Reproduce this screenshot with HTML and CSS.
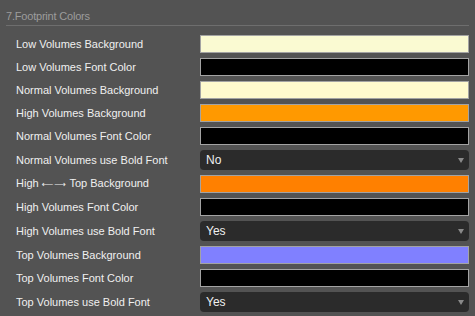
FILE: index.html
```html
<!DOCTYPE html>
<html lang="en">
  <head>
    <meta charset="UTF-8" />
    <title>Footprint Colors</title>
    <link rel="stylesheet" href="styles.css">
  </head>
  <body>
    <section class="panel">
      <h2 class="panel__title">7.Footprint Colors</h2>
      <div class="fields">
        <div class="field">
          <label class="field__label">Low Volumes Background</label>
          <div class="swatch" style="background-color: #fafad2;"></div>
        </div>
        <div class="field">
          <label class="field__label">Low Volumes Font Color</label>
          <div class="swatch" style="background-color: #000000;"></div>
        </div>
        <div class="field">
          <label class="field__label">Normal Volumes Background</label>
          <div class="swatch" style="background-color: #fffacd;"></div>
        </div>
        <div class="field">
          <label class="field__label">High Volumes Background</label>
          <div class="swatch" style="background-color: #ff9900;"></div>
        </div>
        <div class="field">
          <label class="field__label">Normal Volumes Font Color</label>
          <div class="swatch" style="background-color: #000000;"></div>
        </div>
        <div class="field">
          <label class="field__label">Normal Volumes use Bold Font</label>
          <div class="dropdown"><span class="dropdown__value">No</span></div>
        </div>
        <div class="field">
          <label class="field__label">High <span class="field__arrows">&#x27F5;&#x27F6;</span> Top Background</label>
          <div class="swatch" style="background-color: #ff8000;"></div>
        </div>
        <div class="field">
          <label class="field__label">High Volumes Font Color</label>
          <div class="swatch" style="background-color: #000000;"></div>
        </div>
        <div class="field">
          <label class="field__label">High Volumes use Bold Font</label>
          <div class="dropdown"><span class="dropdown__value">Yes</span></div>
        </div>
        <div class="field">
          <label class="field__label">Top Volumes Background</label>
          <div class="swatch" style="background-color: #8080ff;"></div>
        </div>
        <div class="field">
          <label class="field__label">Top Volumes Font Color</label>
          <div class="swatch" style="background-color: #000000;"></div>
        </div>
        <div class="field">
          <label class="field__label">Top Volumes use Bold Font</label>
          <div class="dropdown"><span class="dropdown__value">Yes</span></div>
        </div>
      </div>
    </section>
  </body>
</html>
```

FILE: styles.css
```css
:root {
  --color-bg: #535353;
  --color-text: #f0f0f0;
  --color-title: #9c9c9c;
  --color-rule: #6e6e6e;
  --color-border: #a3a3a3;
  --color-select: #2b2b2b;
  font-family: 'Liberation Sans', Arial, sans-serif;
  font-size: 11px;
  color: var(--color-text);
}
* {
  margin: 0;
  padding: 0;
  box-sizing: border-box;
}
body {
  width: 475px;
  height: 316px;
  background-color: var(--color-bg);
  overflow: hidden;
}
.panel {
  padding: 0 6px;
}
/* 見出し */
.panel__title {
  padding: 9px 0 2px;
  border-bottom: 1px solid var(--color-rule);
  font-size: 11px;
  font-weight: 400;
  line-height: 14px;
  letter-spacing: -0.2px;
  color: var(--color-title);
}
/* 項目 */
.fields {
  display: flex;
  flex-direction: column;
  gap: 5px;
  margin-top: 9px;
  padding-left: 10px;
}
.field {
  display: grid;
  grid-template-columns: 184px 1fr;
  align-items: center;
}
.field__label {
  line-height: 14px;
  white-space: nowrap;
}
.field__arrows {
  font-family: 'DejaVu Sans', sans-serif;
  font-size: 8px;
  letter-spacing: 1px;
}
/* 色 */
.swatch {
  height: 18px;
  border: 1px solid var(--color-border);
}
/* セレクト */
.dropdown {
  display: flex;
  align-items: center;
  height: 20px;
  padding: 0 6px;
  border-radius: 4px;
  background-color: var(--color-select);
  position: relative;
}
.dropdown__value {
  font-size: 12px;
  line-height: 14px;
}
.dropdown::after {
  content: '';
  position: absolute;
  right: 5px;
  top: 8px;
  border-left: 3px solid transparent;
  border-right: 3px solid transparent;
  border-top: 5px solid #8a8a8a;
}
```
